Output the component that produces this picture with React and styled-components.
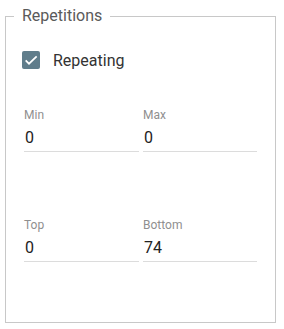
import React from "react";
import styled, { createGlobalStyle } from "styled-components";

const Global = createGlobalStyle`
  html, body { margin: 0; padding: 0; background: #fff; }
  body { font-family: Roboto, "Noto Sans", Arial, sans-serif; }
`;

const Page = styled.div`
  padding: 7px 0 0 5px;
  width: 284px;
  height: 329px;
  box-sizing: border-box;
`;

const Fieldset = styled.fieldset`
  margin: 0;
  width: 271px;
  height: 316px;
  box-sizing: border-box;
  border: 1px solid #c8c8c8;
  padding: 25px 18px 0 16px;
  min-width: 0;
`;

const Legend = styled.legend`
  margin-left: -8px;
  padding: 0 8px;
  font-size: 16px;
  line-height: 18px;
  color: #5a5a5a;
`;

const CheckRow = styled.label`
  display: flex;
  align-items: center;
  gap: 13px;
  height: 20px;
  font-size: 16px;
  color: #333;
  margin-bottom: 38px;
`;

const Box = styled.span`
  width: 18px;
  height: 18px;
  border-radius: 2px;
  background: #607d8b;
  display: flex;
  align-items: center;
  justify-content: center;
`;

const Grid = styled.div`
  display: grid;
  grid-template-columns: 115px 114px;
  column-gap: 4px;
  margin-left: 2px;
  margin-bottom: ${(p) => p.$mb || 0}px;
`;

const Field = styled.div`
  display: flex;
  flex-direction: column;
  border-bottom: 1px solid #dcdcdc;
  padding-bottom: 3px;
`;

const Label = styled.span`
  font-size: 12px;
  line-height: 14px;
  color: #8f8f8f;
`;

const Value = styled.span`
  margin-top: 6px;
  font-size: 16px;
  line-height: 20px;
  color: #222;
  padding-left: 1px;
`;

const FormField = ({ label, value }) => (
  <Field>
    <Label>{label}</Label>
    <Value>{value}</Value>
  </Field>
);

export default function App() {
  return (
    <>
      <Global />
      <Page>
        <Fieldset>
          <Legend>Repetitions</Legend>
          <CheckRow>
            <Box>
              <svg width="16" height="16" viewBox="0 0 24 24">
                <path d="M4 12.5l5 5L20.5 6.5" fill="none" stroke="#fff" strokeWidth="2.6" />
              </svg>
            </Box>
            Repeating
          </CheckRow>
          <Grid $mb={66}>
            <FormField label="Min" value="0" />
            <FormField label="Max" value="0" />
          </Grid>
          <Grid>
            <FormField label="Top" value="0" />
            <FormField label="Bottom" value="74" />
          </Grid>
        </Fieldset>
      </Page>
    </>
  );
}
